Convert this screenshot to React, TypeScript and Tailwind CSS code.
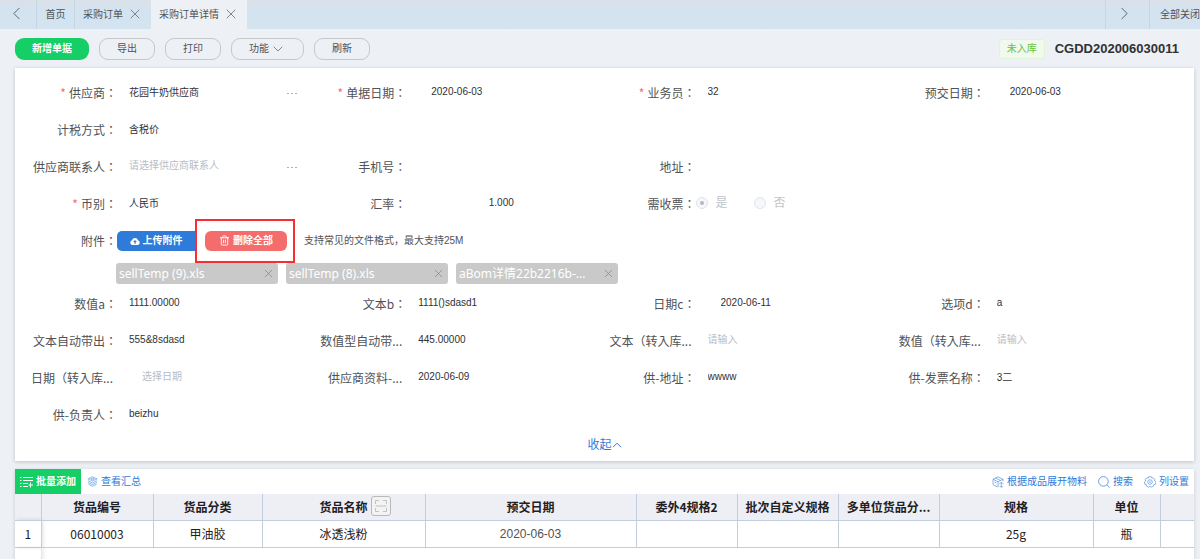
import React from "react";
import { ChevronLeft, ChevronRight, ChevronDown, X, Trash2 } from "lucide-react";

interface Field {
  id: string;
  label: string;
  value?: string;
  placeholder?: string;
  required?: boolean;
  cut?: boolean;
  kind?: "text" | "date" | "picker" | "center" | "radio";
}

const TOP_FIELDS: (Field | null)[] = [
  { id: "supplier", label: "供应商", value: "花园牛奶供应商", required: true, kind: "picker" },
  { id: "billDate", label: "单据日期", value: "2020-06-03", required: true, kind: "date" },
  { id: "salesman", label: "业务员", value: "32", required: true },
  { id: "dueDate", label: "预交日期", value: "2020-06-03", kind: "date" },
  { id: "taxMode", label: "计税方式", value: "含税价" },
  null,
  null,
  null,
  { id: "contact", label: "供应商联系人", placeholder: "请选择供应商联系人", kind: "picker" },
  { id: "mobile", label: "手机号" },
  { id: "address", label: "地址" },
  null,
  { id: "currency", label: "币别", value: "人民币", required: true },
  { id: "rate", label: "汇率", value: "1.000", kind: "center" },
  { id: "invoice", label: "需收票", kind: "radio" },
  null,
];

const CUSTOM_FIELDS: (Field | null)[] = [
  { id: "numA", label: "数值a", value: "1111.00000" },
  { id: "textB", label: "文本b", value: "1111()sdasd1" },
  { id: "dateC", label: "日期c", value: "2020-06-11", kind: "date" },
  { id: "optD", label: "选项d", value: "a" },
  { id: "autoText", label: "文本自动带出", value: "555&8sdasd" },
  { id: "autoNum", label: "数值型自动带...", value: "445.00000", cut: true },
  { id: "textIn", label: "文本（转入库...", placeholder: "请输入", cut: true },
  { id: "numIn", label: "数值（转入库...", placeholder: "请输入", cut: true },
  { id: "dateIn", label: "日期（转入库...", placeholder: "选择日期", cut: true, kind: "date" },
  { id: "supplierInfo", label: "供应商资料-...", value: "2020-06-09", cut: true },
  { id: "supAddress", label: "供-地址", value: "wwww" },
  { id: "supInvoice", label: "供-发票名称", value: "3二" },
  { id: "supOwner", label: "供-负责人", value: "beizhu" },
];

const FILES = ["sellTemp (9).xls", "sellTemp (8).xls", "aBom详情22b2216b-..."];

const COLUMNS = [
  { title: "货品编号", value: "06010003" },
  { title: "货品分类", value: "甲油胶" },
  { title: "货品名称", value: "冰透浅粉", scan: true },
  { title: "预交日期", value: "2020-06-03", latin: true },
  { title: "委外4规格2", value: "" },
  { title: "批次自定义规格", value: "" },
  { title: "多单位货品分...", value: "" },
  { title: "规格", value: "25g" },
  { title: "单位", value: "瓶" },
];

const LABEL =
  "w-[91px] shrink-0 whitespace-nowrap text-right text-[12px] text-[#505256] font-['Noto_Sans_CJK_TC','Noto_Sans_CJK_SC',sans-serif]";

function FieldInput({ field }: { field: Field }) {
  if (field.kind === "radio") {
    return (
      <div className="flex items-center gap-[26px] pb-0.5 text-[12px] text-[#c0c4cc]">
        {["是", "否"].map((text, i) => (
          <label key={text} className="flex items-center gap-2">
            <input
              type="radio"
              name={field.id}
              disabled
              defaultChecked={i === 0}
              className="flex size-[12px] appearance-none items-center justify-center rounded-full border border-[#dfe3ea] bg-[#f5f7fa] before:size-[4px] before:rounded-full checked:before:bg-[#b4b8c0] checked:before:content-['']"
            />
            {text}
          </label>
        ))}
      </div>
    );
  }
  const pad =
    field.kind === "date" ? "pl-[25px]" : field.kind === "center" ? "pl-[12px] pr-[8px] text-center" : "pl-[12px]";
  return (
    <div className="flex w-[186px] items-center pb-0.5">
      <input
        id={field.id}
        type="text"
        readOnly
        defaultValue={field.value}
        placeholder={field.placeholder}
        className={`h-[22px] w-full min-w-0 bg-transparent text-[10px] text-[#2f3136] outline-none placeholder:text-[#b8bcc6] ${pad}`}
      />
      {field.kind === "picker" && (
        <button type="button" aria-label="选择" className="flex shrink-0 gap-[2px] pt-1 pr-[6px]">
          <span className="h-px w-[2px] bg-[#aeb1b9]" />
          <span className="h-px w-[2px] bg-[#aeb1b9]" />
          <span className="h-px w-[2px] bg-[#aeb1b9]" />
        </button>
      )}
    </div>
  );
}

function FieldGrid({ fields }: { fields: (Field | null)[] }) {
  return (
    <div className="grid grid-cols-4 auto-rows-[37px]">
      {fields.map((f, i) =>
        f ? (
          <div key={f.id} className="flex min-w-0 items-center">
            <label htmlFor={f.kind === "radio" ? undefined : f.id} className={`${LABEL} ${f.cut ? "pr-1" : ""}`}>
              {f.required && <span className="mr-[3px] text-[#f56c6c]">*</span>}
              {f.label}
              {!f.cut && "："}
            </label>
            <FieldInput field={f} />
          </div>
        ) : (
          <div key={i} />
        )
      )}
    </div>
  );
}

function ListAddIcon() {
  return (
    <svg viewBox="0 0 13 12" className="h-3 w-[13px]" fill="none" stroke="currentColor">
      <path d="M0 1.5h1.5M3 1.5h10M0 4.5h1.5M3 4.5h10M0 7.5h1.5M3 7.5h5M0 10.5h1.5M3 10.5h5M10.5 6.5v5M8.5 9h4.5" />
    </svg>
  );
}

function LayersIcon() {
  return (
    <svg viewBox="0 0 12 12" className="size-[11px] opacity-80" fill="none" stroke="currentColor" strokeWidth="0.7">
      <path d="M6 .8 11 3.2 6 5.6 1 3.2zM6 2.3l2 .9-2 .9-2-.9zM1 5.2l5 2.5 5-2.5M1 7l5 2.5L11 7M1.5 8.8 6 11.2l4.5-2.4" />
    </svg>
  );
}

function CubeIcon() {
  return (
    <svg viewBox="0 0 12 12" className="size-3 opacity-80" fill="none" stroke="currentColor" strokeWidth="0.7">
      <path d="M5.5 11 1 8.7V3.3L6 .8l5 2.5v2M1 3.3l5 2.4 5-2.4M6 5.7V11M3.5 2l5 2.5M2.5 6l1.800.9" />
      <path d="M9.3 6.2v5M7.3 8.2l2-2 2 2M7.6 10.8h3.4" />
    </svg>
  );
}

function SearchIcon() {
  return (
    <svg viewBox="0 0 12 12" className="size-3 opacity-80" fill="none" stroke="currentColor" strokeWidth="0.9">
      <circle cx="5.4" cy="5.4" r="4.8" />
      <path d="m9 9 2.600 2.600" />
    </svg>
  );
}

function GearIcon() {
  return (
    <svg viewBox="0 0 12 12" className="size-3 opacity-80" fill="none" stroke="currentColor" strokeWidth="0.7">
      <path d="M4.7.7h2.600l.5 1.4 1.5-.3 1.6 1.9-.3 1.300 1.300 1-.6 2.400-1.500.2-.3 1.500-2.200 1.100L6 10.200l-1.300 1-2.200-1.100-.2-1.500-1.400-.3L.5 6l1.200-1-.4-1.300 1.600-1.900 1.500.3z" />
      <circle cx="6" cy="6" r="2.3" />
      <circle cx="6" cy="6" r="0.400" />
    </svg>
  );
}

function ScanIcon() {
  return (
    <svg viewBox="0 0 12 12" className="size-3" fill="none" stroke="#c2c2c2">
      <path d="M.5 4V.5H4M8 .5h3.500V4M.5 8v3.500H4M8 11.500h3.500V8M.5 6h11" />
    </svg>
  );
}

function CollapseIcon() {
  return (
    <svg viewBox="0 0 10 6" className="h-[6px] w-[10px]" fill="none" stroke="currentColor">
      <path d="M1 5.2 5 1.200l4 4" />
    </svg>
  );
}

function CloudUpIcon() {
  return (
    <svg viewBox="0 0 12 10" className="h-[8px] w-[10px]">
      <path fill="#fff" d="M3 10a3 3 0 0 1-.7-5.900 3.800 3.800 0 0 1 7.400 0A3 3 0 0 1 9 10z" />
      <path fill="#2f7bd9" d="M6 3.600 8.400 6.200H6.800V8.500H5.200V6.200H3.600z" />
    </svg>
  );
}

const PILL = "flex h-[22px] items-center justify-center gap-px rounded-[9px] border border-[#c6c8cc] text-[#505256]";

export default function App() {
  return (
    <div className="flex h-screen flex-col overflow-hidden bg-[#edf0f5] text-[10px] text-[#505256] font-['Liberation_Sans','Noto_Sans_CJK_SC',sans-serif]">
      {/* Page tabs */}
      <nav className="flex h-[29px] shrink-0 items-stretch overflow-hidden whitespace-nowrap bg-gradient-to-b from-[#dbe1e8] to-[#d3e3ef] to-30%">
        <button type="button" aria-label="向左" className="flex w-[37px] items-center justify-center border-r border-[#c5d5e2] pr-1 pb-0.5">
          <ChevronLeft className="size-[21px]" strokeWidth={1} />
        </button>
        <a href="#home" className="flex w-[38px] items-center justify-center border-r border-[#c5d5e2]">
          首页
        </a>
        <div className="flex w-[76px] items-center gap-1 pl-2">
          <a href="#orders">采购订单</a>
          <button type="button" aria-label="关闭采购订单" className="pb-px">
            <X className="size-4" strokeWidth={1} />
          </button>
        </div>
        <div className="flex w-[96px] items-center gap-1 bg-[#edf0f5] pl-2">
          <a href="#detail">采购订单详情</a>
          <button type="button" aria-label="关闭采购订单详情" className="pb-px">
            <X className="size-4" strokeWidth={1} />
          </button>
        </div>
        <button type="button" aria-label="向右" className="ml-auto flex w-[45px] items-center justify-center border-x border-[#c5d5e2] pr-[6px] pb-0.5">
          <ChevronRight className="size-[21px]" strokeWidth={1} />
        </button>
        <button type="button" className="w-[50px] pl-[10px] text-left">
          全部关闭
        </button>
      </nav>

      {/* Actions */}
      <header className="flex h-[39px] shrink-0 items-center gap-[10px] pr-[21px] pl-[15px]">
        <button type="button" className="flex h-[22px] w-[74px] items-center justify-center rounded-[9px] bg-[#15ce66] font-bold text-white">
          新增单据
        </button>
        <button type="button" className={`${PILL} w-[56px]`}>导出</button>
        <button type="button" className={`${PILL} w-[56px]`}>打印</button>
        <button type="button" className={`${PILL} w-[73px]`}>
          功能
          <ChevronDown className="size-4" strokeWidth={1} />
        </button>
        <button type="button" className={`${PILL} w-[56px]`}>刷新</button>
        <span className="ml-auto flex h-[20px] w-[46px] items-center justify-center rounded-[3px] border border-[#e1f3d8] bg-[#f0f9eb] text-[#67c23a]">
          未入库
        </span>
        <h1 className="text-[13px] font-bold text-[#303133]">CGDD202006030011</h1>
      </header>

      <main className="flex min-h-0 flex-1 flex-col gap-2 pr-[6px] pl-[15px]">
        {/* Order form */}
        <form className="shrink-0 bg-white px-[11px] pt-[6px] shadow-[0_1px_4px_rgba(0,0,0,0.2)]">
          <FieldGrid fields={TOP_FIELDS} />

          <div className="flex h-[37px] items-center">
            <span className={LABEL}>附件：</span>
            <button type="button" className="flex h-[20px] w-[78px] items-center justify-center gap-[3px] rounded-l-[5px] bg-[#2f7bd9] font-bold text-white">
              <CloudUpIcon />
              上传附件
            </button>
            <div className="relative ml-[10px]">
              <div className="pointer-events-none absolute -top-3 -right-2 -bottom-3 -left-[10px] border-2 border-[#fb2c30]" />
              <button type="button" className="flex h-[20px] w-[82px] items-center justify-center gap-[3px] rounded-[6px] bg-[#f56c6c] font-bold text-white">
                <Trash2 className="size-[11px]" />
                删除全部
              </button>
            </div>
            <span className="ml-[17px]">支持常见的文件格式，最大支持25M</span>
          </div>

          <ul className="flex gap-2 pt-1 pb-px pl-[90px]">
            {FILES.map((name) => (
              <li key={name} className="flex h-[21px] w-[162px] items-center justify-between rounded-[3px] bg-[#c9c9c9] pr-[3px] pl-[3px] text-[12px] text-white font-['Noto_Sans','Noto_Sans_CJK_SC',sans-serif]">
                {name}
                <button type="button" aria-label={`删除 ${name}`}>
                  <X className="size-[13px] text-[#8a8a8a]" strokeWidth={1.5} />
                </button>
              </li>
            ))}
          </ul>

          <FieldGrid fields={CUSTOM_FIELDS} />

          <div className="flex h-[28px] items-center justify-center pb-1">
            <button type="button" className="flex items-center text-[12px] text-[#2f7bd9]">
              收起
              <CollapseIcon />
            </button>
          </div>
        </form>

        {/* Goods table */}
        <section className="min-h-0 flex-1 bg-white shadow-[0_1px_4px_rgba(0,0,0,0.15)]">
          <div className="flex h-[25px] items-center gap-[11px] pr-[5px] text-[#2f7bd9]">
            <button type="button" className="-mr-[5px] flex h-full w-[66px] items-center justify-center gap-[3px] bg-[#15ce66] font-bold text-white">
              <ListAddIcon />
              批量添加
            </button>
            <button type="button" className="flex items-center gap-[3px]">
              <LayersIcon />
              查看汇总
            </button>
            <button type="button" className="ml-auto flex items-center gap-[3px]">
              <CubeIcon />
              根据成品展开物料
            </button>
            <button type="button" className="flex items-center gap-[3px]">
              <SearchIcon />
              搜索
            </button>
            <button type="button" className="flex items-center gap-[3px]">
              <GearIcon />
              列设置
            </button>
          </div>

          <table className="w-full table-fixed border-collapse text-center text-[12px] text-[#1f2024] font-['Noto_Sans_CJK_SC',sans-serif]">
            <colgroup>
              <col className="w-[26px]" />
              <col className="w-[112px]" />
              <col className="w-[109px]" />
              <col className="w-[163px]" />
              <col className="w-[211px]" />
              <col className="w-[101px]" />
              <col className="w-[101px]" />
              <col className="w-[101px]" />
              <col className="w-[154px]" />
              <col className="w-[67px]" />
              <col />
            </colgroup>
            <thead>
              <tr className="h-[26px] bg-[#eeeff5]">
                <th className="border-r border-b border-[#c3cde0]" />
                {COLUMNS.map((c) => (
                  <th key={c.title} className="whitespace-nowrap border-r border-b border-[#c3cde0] p-0 leading-4">
                    <span className="relative">
                      {c.title}
                      {c.scan && (
                        <button type="button" aria-label="扫码" className="absolute -top-0.5 left-full ml-[3px] flex size-5 items-center justify-center rounded-[3px] border border-[#b9b9b9] bg-[#f3f3f4]">
                          <ScanIcon />
                        </button>
                      )}
                    </span>
                  </th>
                ))}
                <th className="border-b border-[#c3cde0]" />
              </tr>
            </thead>
            <tbody>
              <tr className="h-[27px]">
                <td className="border-r border-b border-[#c3cde0] p-0 leading-4 shadow-[2px_0_4px_rgba(0,0,0,0.12)]">1</td>
                {COLUMNS.map((c) => (
                  <td
                    key={c.title}
                    className={`border-r border-b border-[#c3cde0] p-0 leading-4 ${c.latin ? "text-[#505256] font-['Liberation_Sans',sans-serif]" : ""}`}
                  >
                    {c.value}
                  </td>
                ))}
                <td className="border-b border-[#c3cde0]" />
              </tr>
            </tbody>
          </table>
          <div className="h-full w-[27px] border-r border-[#e3e5ea] shadow-[2px_0_4px_rgba(0,0,0,0.08)]" />
        </section>
      </main>
    </div>
  );
}
